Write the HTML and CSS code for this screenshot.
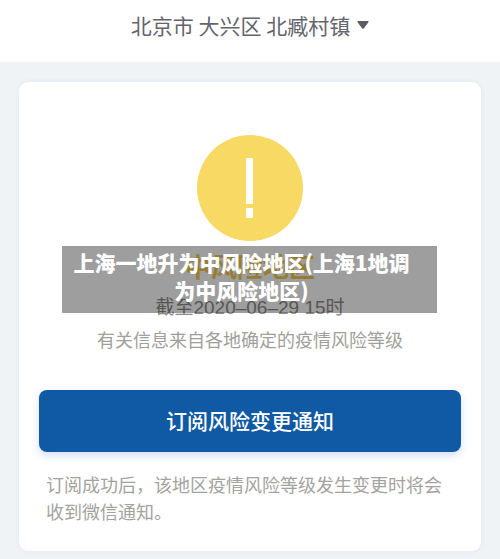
FILE: index.html
```html
<!DOCTYPE html>
<html lang="zh-CN">
<head>
    <meta charset="UTF-8">
    <meta name="viewport" content="width=device-width, initial-scale=1.0">
    <title>中风险地区</title>
    <link rel="stylesheet" href="styles.css">
</head>
<body>
    <header class="header">
        <button type="button" class="location">
            北京市 大兴区 北臧村镇
            <svg class="caret" viewBox="0 0 12 8" aria-hidden="true">
                <path d="M1.2 0H10.8Q12.4 0 11.4 1.3L7 7.2Q6 8.4 5 7.2L.6 1.3Q-.4 0 1.2 0Z" fill="#5b5c64"/>
            </svg>
        </button>
    </header>

    <main class="card">
        <svg class="warning" viewBox="0 0 106 106" aria-hidden="true">
            <circle cx="53" cy="53" r="53" fill="#f8d964"/>
            <rect x="49" y="23" width="7" height="46" fill="#fff"/>
            <rect x="49" y="73" width="7" height="10" fill="#fff"/>
        </svg>
        <h1 class="level">中风险地区</h1>
        <p class="date">截至2020–06–29 15时</p>
        <p class="source">有关信息来自各地确定的疫情风险等级</p>
        <button type="button" class="subscribe">订阅风险变更通知</button>
        <p class="note">订阅成功后，该地区疫情风险等级发生变更时将会收到微信通知。</p>
    </main>

    <div class="caption">上海一地升为中风险地区(上海1地调<br>为中风险地区)</div>
</body>
</html>
```

FILE: styles.css
```css
* {
    box-sizing: border-box;
}

body {
    position: relative;
    margin: 0;
    background-color: #eff3f6;
    font-family: "Noto Sans CJK SC", sans-serif;
    font-size: 18px;
    line-height: 27px;
}

h1,
p {
    margin: 0;
}

button {
    border: 0;
    font-family: inherit;
}

.header {
    display: flex;
    justify-content: center;
    padding: 10px 16px 22px;
    background-color: #fff;
}

.location {
    display: flex;
    align-items: center;
    gap: 7px;
    padding: 0;
    background: none;
    color: #63646c;
    font-size: 21px;
    line-height: 30px;
}

.caret {
    width: 12px;
    height: 8px;
}

.card {
    display: flex;
    flex-direction: column;
    align-items: center;
    margin: 20px 19px 8px;
    padding: 53px 20px 26px;
    border-radius: 9px;
    background-color: #fff;
    box-shadow: 0 0 5px rgba(60, 80, 100, 0.08);
}

.warning {
    width: 106px;
    height: 106px;
}

.level {
    margin-top: 7px;
    color: #f0cc50;
    font-size: 26px;
    line-height: 36px;
}

.date {
    margin-top: 10px;
    color: #8c8c88;
    font-family: "Liberation Sans", "Noto Sans CJK SC", sans-serif;
    font-size: 19px;
}

.source {
    margin-top: 5px;
    color: #a0a09b;
}

.subscribe {
    width: 100%;
    margin-top: 37px;
    padding: 15px 16px 17px;
    border-radius: 8px;
    background-color: #1059a5;
    box-shadow: 0 4px 8px rgba(50, 100, 220, 0.2);
    color: #fff;
    font-size: 21px;
    font-weight: 500;
    line-height: 30px;
}

.note {
    width: 100%;
    margin-top: 19px;
    padding: 0 7px;
    color: #a3a39e;
}

.caption {
    position: absolute;
    top: 246px;
    left: 62px;
    right: 63px;
    padding: 2px 16px 9px 0;
    background-color: rgba(0, 0, 0, 0.38);
    color: #fff;
    font-size: 21px;
    font-weight: 900;
    line-height: 28px;
    text-align: center;
}
```
